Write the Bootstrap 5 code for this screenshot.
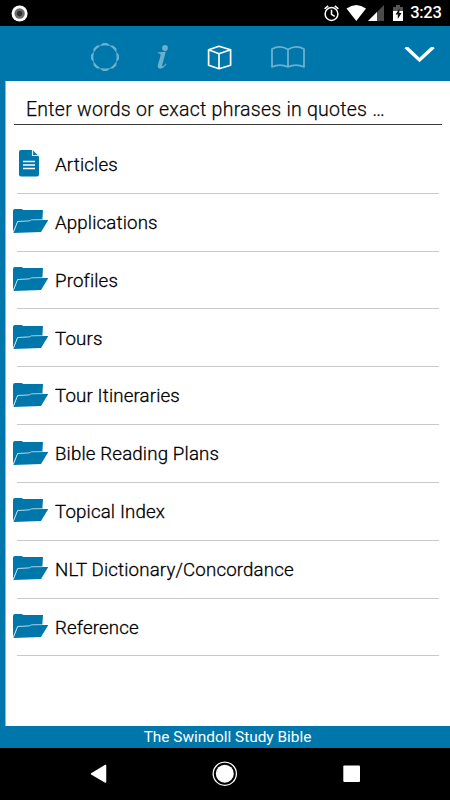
<!DOCTYPE html>
<html lang="en">
<head>
<meta charset="utf-8">
<meta name="viewport" content="width=device-width, initial-scale=1">
<title>The Swindoll Study Bible</title>
<link href="https://cdn.jsdelivr.net/npm/bootstrap@5.3.0/dist/css/bootstrap.min.css" rel="stylesheet">
<style>
:root { --brand: #0077ab; }
body { font-family: Roboto, "Liberation Sans", sans-serif; height: 800px; background: var(--brand); color: #000; }
svg { display: block; flex: none; }
.status { height: 26px; padding: 0 8.5px 0 11px; }
.clock { font-size: 16.500px; font-weight: 500; line-height: 28px; letter-spacing: -.3px; margin-left: 5px; }
.tools { height: 55px; padding: 6px 14px 0 90px; }
.tools svg.dim { opacity: .42; }
.panel { margin-left: 5px; border-left: 1px solid #8fb9d0; height: 645px; }
.search { height: 44px; margin: 0 8px; padding: 10px 12px 0; border-bottom: 1px solid #3c3c3c; font-size: 19.5px; font-weight: 300; letter-spacing: .25px; -webkit-text-stroke: .25px #111; }
.search span { line-height: 38px; }
.entries { padding-top: 11px; }
.entry { height: 57.84px; margin: 0 11px; border-bottom: 1px solid #c9c9c9; }
.entry .pic { width: 38px; margin-left: -5px; margin-top: -2px; }
.entry .label { font-size: 18.7px; font-weight: 300; line-height: 55px; padding: 2.5px 0 0 5px; letter-spacing: .15px; -webkit-text-stroke: .3px #000; }
.title-bar { height: 22px; font-size: 15.4px; font-weight: 400; line-height: 22px; padding-left: 5px; }
.keys { height: 52px; }
</style>
<script src="https://cdn.jsdelivr.net/npm/bootstrap@5.3.0/dist/js/bootstrap.bundle.min.js"></script>
</head>
<body class="d-flex flex-column overflow-hidden">
<svg width="0" height="0" class="position-absolute">
  <symbol id="folder" viewBox="0 0 38 26">
    <path d="M1 24V3Q1 1 3 1h6.500l2 1H31l-.7 10.500L5.500 13.500z" fill="#0077ab"/>
    <path d="M1.300 25 5.800 13.600 18 13l1.500-1H36.300L29 24z" fill="#0077ab"/>
    <path d="M1.300 24.500 5.600 13.500 17.500 12.800l2-1 11-.2" fill="none" stroke="#cfe5f0" stroke-width=".8"/>
  </symbol>
</svg>

<div class="status bg-black text-white d-flex align-items-center">
  <svg width="17" height="17" viewBox="0 0 17 17"><circle cx="8.600" cy="8.500" r="8" fill="#fff"/><circle cx="8.600" cy="8.500" r="5.200" fill="#6d6d6d"/><circle cx="8.600" cy="8.500" r="2.700" fill="#333"/></svg>
  <svg class="ms-auto" width="82" height="26" viewBox="323 0 82 26">
    <g fill="none" stroke="#fff" stroke-width="1.500"><circle cx="331.500" cy="14" r="6.400"/><path d="M331.500 9.700v4.700l3.200 2M324.600 8.800l3.600-3M338.400 8.800l-3.600-3"/></g>
    <path d="M346.500 8.600Q356.300 1.500 366 8.600L356.300 21z" fill="#fff"/>
    <path d="M384 5v16h-16z" fill="#4b4b4b"/><path d="M377 12v9h-9z" fill="#fff"/>
    <path d="M393 7h3V5h4v2h3v4h-10z" fill="#555"/><path d="M393 11h10v10h-10z" fill="#fff"/><path d="m399.500 8.500-4 6h2.300v4.500l3.800-6h-2.300z" fill="#111"/>
  </svg>
  <span class="clock">3:23</span>
</div>

<nav class="tools d-flex align-items-center">
  <svg class="dim" width="30" height="30" viewBox="-15 -15 30 30">
    <g id="arc" fill="#fff"><g id="quad"><path id="one" d="M-4.600-12L-2-14H2L4.600-12L2.500-11.800H-2.500z"/><use href="#one" transform="rotate(45)"/></g><use href="#quad" transform="rotate(90)"/></g><use href="#arc" transform="rotate(180)"/>
    <circle r="12.300" fill="none" stroke="#fff" stroke-width=".8"/>
  </svg>
  <svg class="dim" width="14" height="30" viewBox="156 42 14 30" style="margin-left:36px">
    <circle cx="165" cy="48" r="2.900" fill="#fff"/><path d="M158.200 52.300l7.600-.5-3.600 13.200q-.4 1.800.8 1.200 1.200-.7 2.700-2.700l.9.600q-3.200 4.600-6.400 4.600-3.300-.2-2.300-3.900l2.600-9q.5-2-1-2.200h-1.600z" fill="#fff"/>
  </svg>
  <svg width="26" height="28" viewBox="206 42.500 26 28" style="margin-left:36px">
    <path d="M219 45.800 208.600 49.200V64.800L219 68.200 230.600 64.800V49.200zM208.600 49.200 219 53.200 230.600 49.200M219 53.200V68.200" fill="none" stroke="#fff" stroke-width="1.700" stroke-linejoin="round"/>
  </svg>
  <svg class="dim" width="36" height="26" viewBox="270 44 36 26" style="margin-left:38px">
    <path d="M288 49.500Q280 44.500 272 49V66.800Q280 63.500 288 66.800 296 63.500 304 66.800V49Q296 44.500 288 49.500V66.800" fill="none" stroke="#fff" stroke-width="1.800" stroke-linejoin="round"/>
  </svg>
  <svg class="ms-auto" width="32" height="20" viewBox="404 46.500 32 20"><path d="M405.700 46.500 419.500 59.500 433.500 46.500" fill="none" stroke="#fff" stroke-width="3.400"/></svg>
</nav>

<main class="panel bg-white">
  <div class="search text-nowrap"><span>Enter words or exact phrases in quotes …</span></div>
  <div class="entries">
    <div class="entry d-flex align-items-center"><div class="pic"><svg width="38" height="28" viewBox="-2 0 38 28"><path d="M7 1H18.500l6.500 6.500V25.500q0 2-2 2H7q-2 0-2-2V3q0-2 2-2z" fill="#0077ab"/><path d="M18.500 1v5.500H25" fill="none" stroke="#d9ebf4" stroke-width="1.200"/><path d="M9 12.500H21M9 16H21M9 19.500H21" stroke="#fff" stroke-width="1.300"/></svg></div><span class="label">Articles</span></div>
    <div class="entry d-flex align-items-center"><div class="pic"><svg width="38" height="26"><use href="#folder"/></svg></div><span class="label">Applications</span></div>
    <div class="entry d-flex align-items-center"><div class="pic"><svg width="38" height="26"><use href="#folder"/></svg></div><span class="label">Profiles</span></div>
    <div class="entry d-flex align-items-center"><div class="pic"><svg width="38" height="26"><use href="#folder"/></svg></div><span class="label">Tours</span></div>
    <div class="entry d-flex align-items-center"><div class="pic"><svg width="38" height="26"><use href="#folder"/></svg></div><span class="label">Tour Itineraries</span></div>
    <div class="entry d-flex align-items-center"><div class="pic"><svg width="38" height="26"><use href="#folder"/></svg></div><span class="label">Bible Reading Plans</span></div>
    <div class="entry d-flex align-items-center"><div class="pic"><svg width="38" height="26"><use href="#folder"/></svg></div><span class="label">Topical Index</span></div>
    <div class="entry d-flex align-items-center"><div class="pic"><svg width="38" height="26"><use href="#folder"/></svg></div><span class="label">NLT Dictionary/Concordance</span></div>
    <div class="entry d-flex align-items-center"><div class="pic"><svg width="38" height="26"><use href="#folder"/></svg></div><span class="label">Reference</span></div>
  </div>
</main>

<footer class="title-bar text-white text-center">The Swindoll Study Bible</footer>
<div class="keys bg-black">
  <svg width="450" height="52" viewBox="0 748 450 52" fill="#fff">
    <path d="M105.500 765.500v16.500L91.500 773.800z" stroke="#fff" stroke-width="1.500" stroke-linejoin="round"/>
    <circle cx="224.800" cy="773.700" r="11.600" fill="none" stroke="#fff" stroke-width="1.300"/><circle cx="224.800" cy="773.700" r="9"/>
    <rect x="343.300" y="765.500" width="16.700" height="16.500" rx="1"/>
  </svg>
</div>
</body>
</html>
